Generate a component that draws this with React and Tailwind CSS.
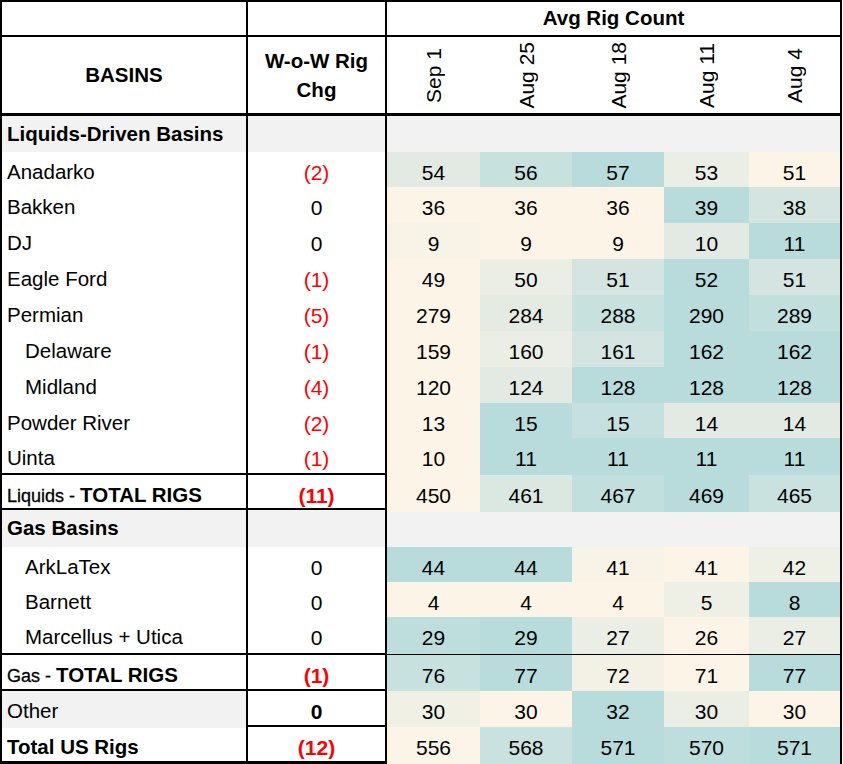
import React from 'react';

const COLS = 'grid grid-cols-[246px_139px_93px_92px_92px_85px_91px]';

const CREAM = [252, 245, 231];
const MID = [226, 234, 227];
const TEAL = [184, 220, 220];

function mix(a, b, t) {
  return a.map((v, i) => Math.round(v + (b[i] - v) * t));
}

function heatColor(t) {
  const c = t < 0.5 ? mix(CREAM, MID, t * 2) : mix(MID, TEAL, (t - 0.5) * 2);
  return `rgb(${c[0]}, ${c[1]}, ${c[2]})`;
}

// raw = values used for shading (some weekly averages are fractional), vals = labels
const rows = [
  { type: 'section', label: 'Liquids-Driven Basins', h: 'h-[36px]' },
  { name: 'Anadarko', chg: '(2)', red: true, vals: [54, 56, 57, 53, 51], h: 'h-[35px]' },
  { name: 'Bakken', chg: '0', vals: [36, 36, 36, 39, 38], h: 'h-[36px]' },
  { name: 'DJ', chg: '0', vals: [9, 9, 9, 10, 11], raw: [9.2, 9, 9, 10, 11], h: 'h-[36px]' },
  { name: 'Eagle Ford', chg: '(1)', red: true, vals: [49, 50, 51, 52, 51], h: 'h-[36px]' },
  { name: 'Permian', chg: '(5)', red: true, vals: [279, 284, 288, 290, 289], h: 'h-[36px]' },
  { name: 'Delaware', indent: true, chg: '(1)', red: true, vals: [159, 160, 161, 162, 162], h: 'h-[36px]' },
  { name: 'Midland', indent: true, chg: '(4)', red: true, vals: [120, 124, 128, 128, 128], h: 'h-[36px]' },
  { name: 'Powder River', chg: '(2)', red: true, vals: [13, 15, 15, 14, 14], raw: [13, 15, 14.7, 14, 14], h: 'h-[35px]' },
  { name: 'Uinta', chg: '(1)', red: true, vals: [10, 11, 11, 11, 11], h: 'h-[37px]', border: true },
  { type: 'total', pre: 'Liquids - ', label: 'TOTAL RIGS', chg: '(11)', vals: [450, 461, 467, 469, 465], h: 'h-[35px]' },
  { type: 'section', label: 'Gas Basins', h: 'h-[37px]' },
  { name: 'ArkLaTex', indent: true, chg: '0', vals: [44, 44, 41, 41, 42], raw: [44, 44, 41.3, 41, 41.8], h: 'h-[35px]' },
  { name: 'Barnett', indent: true, chg: '0', vals: [4, 4, 4, 5, 8], h: 'h-[35px]' },
  { name: 'Marcellus + Utica', indent: true, chg: '0', vals: [29, 29, 27, 26, 27], raw: [28.8, 29, 27, 26, 27], h: 'h-[38px]', border: true },
  { type: 'total', pre: 'Gas - ', label: 'TOTAL RIGS', chg: '(1)', vals: [76, 77, 72, 71, 77], h: 'h-[36px]' },
  { type: 'other', name: 'Other', chg: '0', vals: [30, 30, 32, 30, 30], raw: [30.4, 29.9, 32, 30.6, 29.9], h: 'h-[36px]' },
  { type: 'grand', name: 'Total US Rigs', chg: '(12)', vals: [556, 568, 571, 570, 571], h: 'h-[36px]' },
];

const dates = ['Sep 1', 'Aug 25', 'Aug 18', 'Aug 11', 'Aug 4'];

function HeatCells({ vals, raw }) {
  const r = raw || vals;
  const lo = Math.min(...r);
  const hi = Math.max(...r);
  return r.map((v, i) => (
    <div
      key={i}
      className="flex items-center justify-center pt-[5px] text-[21px] text-black"
      style={{ backgroundColor: heatColor(hi === lo ? 0 : (v - lo) / (hi - lo)) }}
    >
      {vals[i]}
    </div>
  ));
}

function Row({ row }) {
  if (row.type === 'section') {
    return (
      <div className={`${COLS} ${row.h} bg-[#f2f2f2]`}>
        <div className="flex items-center pl-[5px] border-r-2 border-black text-[20.5px] font-bold">{row.label}</div>
        <div className="border-r-2 border-black" />
        <div className="col-span-5" />
      </div>
    );
  }

  const isTotal = row.type === 'total' || row.type === 'grand' || row.type === 'other';
  return (
    <div className={`${COLS} ${row.h} ${isTotal || row.border ? 'border-b-2 border-black' : ''}`}>
      <div
        className={`flex items-center pt-[5px] border-r-2 border-black ${row.indent ? 'pl-[23px]' : 'pl-[5px]'} ${
          row.type === 'other' ? 'bg-[#f2f2f2]' : ''
        }`}
      >
        {row.type === 'total' ? (
          <span className="text-[20.5px] font-bold">
            <span className="text-[18px] font-normal [-webkit-text-stroke:0.3px_black]">{row.pre}</span>
            {row.label}
          </span>
        ) : (
          <span className={`text-[20.5px] ${row.type === 'grand' ? 'font-bold' : ''}`}>{row.name}</span>
        )}
      </div>
      <div
        className={`flex items-center justify-center pt-[5px] border-r-2 border-black text-[21px] ${
          row.red || (isTotal && row.chg !== '0') ? 'text-[#ff0000]' : 'text-black'
        } ${isTotal ? 'font-bold' : ''}`}
      >
        {row.chg}
      </div>
      <HeatCells vals={row.vals} raw={row.raw} />
    </div>
  );
}

export default function App() {
  return (
    <div className="w-[843px] h-[764px] bg-white font-['Liberation_Sans',Arial,sans-serif] text-black">
      <div className="w-[842px] border-2 border-black">
        {/* header line 1 */}
        <div className={`${COLS} h-[35px] border-b-2 border-black`}>
          <div className="border-r-2 border-black" />
          <div className="border-r-2 border-black" />
          <div className="col-span-5 flex items-center justify-center text-[20.5px] font-bold">Avg Rig Count</div>
        </div>
        {/* header line 2 */}
        <div className={`${COLS} h-[79px] border-b-[3px] border-black`}>
          <div className="flex items-center justify-center border-r-2 border-black text-[20.5px] font-bold">BASINS</div>
          <div className="flex items-center justify-center border-r-2 border-black text-center text-[20.5px] font-bold leading-[29px]">
            W-o-W Rig
            <br />
            Chg
          </div>
          {dates.map((d) => (
            <div key={d} className="flex items-center justify-center">
              <span className="[writing-mode:vertical-rl] rotate-180 text-[21px] leading-none">{d}</span>
            </div>
          ))}
        </div>
        {rows.map((row, i) => (
          <Row key={i} row={row} />
        ))}
      </div>
    </div>
  );
}
